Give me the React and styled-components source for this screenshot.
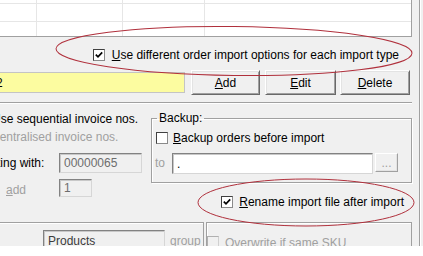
import React from "react";
import styled, { createGlobalStyle } from "styled-components";

const GlobalStyle = createGlobalStyle`
  *, *::before, *::after { box-sizing: border-box; }
  html, body { margin: 0; padding: 0; background: #fff; }
`;

const Window = styled.div`
  position: relative;
  width: 423px;
  height: 246px;
  overflow: hidden;
  background: #f0f0f0;
  font-family: "Liberation Sans", Arial, sans-serif;
  font-size: 12px;
  line-height: 14px;
  color: #000;
`;

const Panel = styled.div`
  width: 420px;
  height: 100%;
  padding-right: 7px;
  border-right: 1px solid #a0a0a0;
  box-shadow: 1px 0 0 #fff;
  display: flex;
  flex-direction: column;
`;

const Grid = styled.div`
  flex: none;
  height: 37px;
  background: #fff;
  border-right: 1px solid #a0a0a0;
  border-bottom: 1px solid #a0a0a0;
  display: grid;
  grid-template-columns: 37px 86px 82px 1fr;
  grid-template-rows: 4px 18px 1fr;
  overflow: hidden;
`;

const Cell = styled.div`
  border-right: ${(p) => (p.$lastCol ? "none" : "1px solid #e6e6e6")};
  border-bottom: ${(p) => (p.$lastRow ? "none" : "1px solid #e6e6e6")};
`;

const OptionRow = styled.div`
  flex: none;
  height: 33px;
  padding-top: 3px;
  padding-right: 13px;
  display: flex;
  align-items: center;
  justify-content: flex-end;
  gap: 7px;
`;

const ActionRow = styled.div`
  flex: none;
  height: 25px;
  display: flex;
  align-items: flex-start;
`;

const YellowField = styled.div`
  width: 185px;
  height: 21px;
  margin-top: 2px;
  background: #fcfca0;
  border: 1px solid #c4c4c4;
  border-left: none;
  display: flex;
  align-items: center;
  overflow: hidden;
  span {
    margin-left: -4px;
  }
`;

const Button = styled.div`
  width: ${(p) => p.$w}px;
  height: ${(p) => p.$h || 25}px;
  margin-left: ${(p) => p.$gap || 0}px;
  margin-top: ${(p) => p.$top || 0}px;
  display: flex;
  align-items: center;
  justify-content: center;
  background: #f0f0f0;
  color: ${(p) => (p.$disabled ? "#a0a0a0" : "#000")};
  border-top: 1px solid #fff;
  border-left: 1px solid #fff;
  border-right: 1px solid ${(p) => (p.$disabled ? "#a0a0a0" : "#696969")};
  border-bottom: 1px solid ${(p) => (p.$disabled ? "#a0a0a0" : "#696969")};
  box-shadow: ${(p) =>
    p.$disabled
      ? "inset -1px -1px 0 #e3e3e3"
      : "inset 1px 1px 0 #e3e3e3, inset -1px -1px 0 #a0a0a0"};
`;

const Separator = styled.div`
  flex: none;
  height: 2px;
  margin-top: ${(p) => p.$top || 0}px;
  border-top: 1px solid #a0a0a0;
  border-bottom: 1px solid #fff;
`;

const Middle = styled.div`
  flex: none;
  height: 118px;
  display: grid;
  grid-template-columns: 151px 1fr;
`;

const LeftColumn = styled.div`
  padding-top: 6px;
  display: flex;
  flex-direction: column;
  overflow: hidden;
`;

const TextRow = styled.div`
  height: 18px;
  display: flex;
  align-items: center;
  white-space: nowrap;
  color: ${(p) => (p.$disabled ? "#a0a0a0" : "#000")};
  span {
    margin-left: ${(p) => p.$shift || 0}px;
  }
`;

const FieldRow = styled.div`
  height: ${(p) => p.$h}px;
  margin-top: ${(p) => p.$top}px;
  display: flex;
  align-items: flex-start;
  white-space: nowrap;
`;

const FieldLabel = styled.div`
  width: 59px;
  flex: none;
  align-self: center;
  padding-left: ${(p) => p.$indent || 0}px;
  padding-top: ${(p) => p.$drop || 0}px;
  color: ${(p) => (p.$disabled ? "#a0a0a0" : "#000")};
  overflow: hidden;
  span {
    margin-left: ${(p) => p.$shift || 0}px;
  }
`;

const Field = styled.div`
  width: ${(p) => p.$w}px;
  height: ${(p) => p.$h}px;
  margin-top: ${(p) => p.$top || 0}px;
  flex: none;
  display: flex;
  align-items: center;
  padding-left: 4px;
  background: ${(p) => (p.$disabled ? "#f0f0f0" : "#fff")};
  color: ${(p) => p.$ink || (p.$disabled ? "#6d6d6d" : "#000")};
  border-top: 1px solid #828282;
  border-left: 1px solid #828282;
  border-right: 1px solid #d6d6d6;
  border-bottom: 1px solid #d6d6d6;
  box-shadow: inset 1px 1px 0 #c8c8c8;
  white-space: nowrap;
  overflow: hidden;
`;

const RightColumn = styled.div`
  display: flex;
  flex-direction: column;
`;

const GroupBox = styled.fieldset`
  margin: 7px 0 0;
  padding: 0 13px 8px 4px;
  min-width: 0;
  border: 1px solid #a0a0a0;
  box-shadow: inset 1px 1px 0 #fff, 1px 1px 0 #fff;
`;

const Legend = styled.legend`
  margin-left: 1px;
  padding: 0 2px;
  line-height: 14px;
`;

const CheckRow = styled.div`
  height: 16px;
  margin-top: ${(p) => p.$top || 0}px;
  display: flex;
  align-items: center;
  justify-content: ${(p) => (p.$end ? "flex-end" : "flex-start")};
  padding-right: ${(p) => p.$right || 0}px;
  gap: ${(p) => p.$gap || 5}px;
  white-space: nowrap;
  color: ${(p) => (p.$disabled ? "#a0a0a0" : "#000")};
`;

const ToRow = styled.div`
  height: 22px;
  margin-top: 6px;
  display: flex;
  align-items: flex-start;
`;

const ToLabel = styled.div`
  align-self: center;
  margin-left: -1px;
  width: 17px;
  color: #a0a0a0;
`;

const Box = styled.div`
  width: 12px;
  height: 12px;
  flex: none;
  background: ${(p) => (p.$disabled ? "#f0f0f0" : "#fff")};
  border-top: 1px solid ${(p) => (p.$disabled ? "#b0b0b0" : "#404040")};
  border-left: 1px solid ${(p) => (p.$disabled ? "#b0b0b0" : "#404040")};
  border-right: 1px solid ${(p) => (p.$disabled ? "#d0d0d0" : "#8a8a8a")};
  border-bottom: 1px solid ${(p) => (p.$disabled ? "#d0d0d0" : "#8a8a8a")};
  display: flex;
  align-items: center;
  justify-content: center;
`;

const Bottom = styled.div`
  flex: none;
  display: flex;
  gap: 2px;
  height: 40px;
`;

const LowerGroup = styled.div`
  width: ${(p) => p.$w}px;
  margin-left: ${(p) => p.$left || 0}px;
  border: 1px solid #a0a0a0;
  box-shadow: inset 1px 1px 0 #fff;
  padding: ${(p) => p.$pad};
  display: flex;
  align-items: flex-start;
  gap: ${(p) => p.$gap || 0}px;
  white-space: nowrap;
`;

const GrayText = styled.div`
  color: #a0a0a0;
  margin-top: ${(p) => p.$top || 0}px;
`;

const Overlay = styled.svg`
  position: absolute;
  left: 0;
  top: 0;
  pointer-events: none;
`;

const Check = ({ checked, disabled }) => (
  <Box $disabled={disabled}>
    {checked && (
      <svg width="8" height="8" viewBox="0 0 8 8">
        <path d="M0.8 3.6 L3 5.8 L7.2 1.4" fill="none" stroke="#000" strokeWidth="1.7" />
      </svg>
    )}
  </Box>
);

const rows = [0, 1, 2];
const cols = [0, 1, 2, 3];

export default function App() {
  return (
    <>
      <GlobalStyle />
      <Window>
        <Panel>
          <Grid>
            {rows.map((r) =>
              cols.map((c) => <Cell key={r + "-" + c} $lastCol={c === 3} $lastRow={r === 2} />)
            )}
          </Grid>

          <OptionRow>
            <Check checked />
            <span>
              <u>U</u>se different order import options for each import type
            </span>
          </OptionRow>

          <ActionRow>
            <YellowField>
              <span>2</span>
            </YellowField>
            <Button $w={69} $gap={6}>
              <span>
                <u>A</u>dd
              </span>
            </Button>
            <Button $w={71} $gap={5}>
              <span>
                <u>E</u>dit
              </span>
            </Button>
            <Button $w={70} $gap={4}>
              <span>
                <u>D</u>elete
              </span>
            </Button>
          </ActionRow>

          <Separator $top={7} />

          <Middle>
            <LeftColumn>
              <TextRow $shift={-8}>
                <span>Use sequential invoice nos.</span>
              </TextRow>
              <TextRow $shift={-9} $disabled>
                <span>Centralised invoice nos.</span>
              </TextRow>
              <FieldRow $h={21} $top={6}>
                <FieldLabel $shift={-25}>
                  <span>Starting with:</span>
                </FieldLabel>
                <Field $w={83} $h={20} $top={1} $disabled>
                  00000065
                </Field>
              </FieldRow>
              <FieldRow $h={20} $top={5}>
                <FieldLabel $indent={6} $drop={3} $disabled>
                  <u>a</u>dd
                </FieldLabel>
                <Field $w={33} $h={18} $top={1} $disabled>
                  1
                </Field>
              </FieldRow>
            </LeftColumn>

            <RightColumn>
              <GroupBox>
                <Legend>Backup:</Legend>
                <CheckRow $top={5}>
                  <Check />
                  <span>
                    <u>B</u>ackup orders before import
                  </span>
                </CheckRow>
                <ToRow>
                  <ToLabel>to</ToLabel>
                  <Field $w={201} $h={21} $top={1}>
                    .
                  </Field>
                  <Button $w={23} $h={19} $gap={2} $top={1} $disabled>
                    ...
                  </Button>
                </ToRow>
              </GroupBox>
              <CheckRow $top={11} $end $right={8} $gap={6}>
                <Check checked />
                <span>
                  <u>R</u>ename import file after import
                </span>
              </CheckRow>
            </RightColumn>
          </Middle>

          <Bottom>
            <LowerGroup $w={206} $left={-2} $pad="7px 0 0 44px" $gap={5}>
              <Field $w={122} $h={22} $disabled $ink="#3c3c3c">
                Products
              </Field>
              <GrayText $top={4}>group</GrayText>
            </LowerGroup>
            <LowerGroup $w={206} $pad="13px 0 0 0" $gap={6}>
              <Check disabled />
              <GrayText>Overwrite if same SKU</GrayText>
            </LowerGroup>
          </Bottom>
        </Panel>

        <Overlay width="423" height="246" viewBox="0 0 423 246">
          <ellipse
            cx="234"
            cy="51"
            rx="178"
            ry="24.5"
            fill="none"
            stroke="#b0303c"
            strokeWidth="1"
            transform="rotate(0.7 234 51)"
          />
          <ellipse cx="306" cy="202.5" rx="108" ry="23.5" fill="none" stroke="#b0303c" strokeWidth="1" />
        </Overlay>
      </Window>
    </>
  );
}
